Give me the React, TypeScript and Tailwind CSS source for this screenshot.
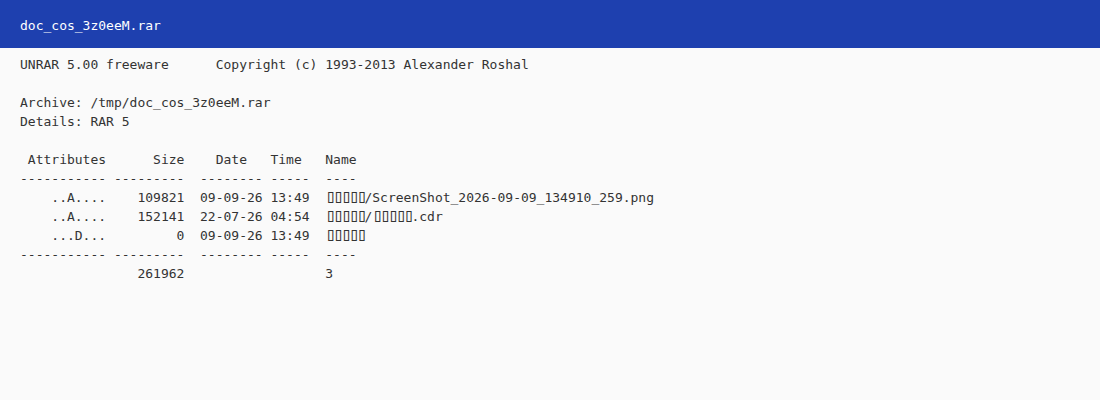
const Box = () => (
  <span className="text-[18px] leading-[0] tracking-[-3px]">▯▯▯▯▯</span>
);

export default function App() {
  return (
    <div className="min-h-[400px] w-full bg-[#fafafa] font-['DejaVu_Sans_Mono',monospace] text-[13px]">
      <div className="flex h-12 items-center bg-[#1e40af] px-5 pt-[9px] pb-[5px] text-white">
        doc_cos_3z0eeM.rar
      </div>
      <pre className="m-0 px-5 pt-[7px] font-['DejaVu_Sans_Mono',monospace] text-[13px] leading-[19px] text-[#333]">
        {"UNRAR 5.00 freeware      Copyright (c) 1993-2013 Alexander Roshal\n"}
        {"\n"}
        {"Archive: /tmp/doc_cos_3z0eeM.rar\n"}
        {"Details: RAR 5\n"}
        {"\n"}
        {" Attributes      Size    Date   Time   Name\n"}
        {"----------- ---------  -------- -----  ----\n"}
        {"    ..A....    109821  09-09-26 13:49  "}
        <Box />
        {"/ScreenShot_2026-09-09_134910_259.png\n"}
        {"    ..A....    152141  22-07-26 04:54  "}
        <Box />
        {"/"}
        <Box />
        {".cdr\n"}
        {"    ...D...         0  09-09-26 13:49  "}
        <Box />
        {"\n"}
        {"----------- ---------  -------- -----  ----\n"}
        {"               261962                  3"}
      </pre>
    </div>
  );
}
